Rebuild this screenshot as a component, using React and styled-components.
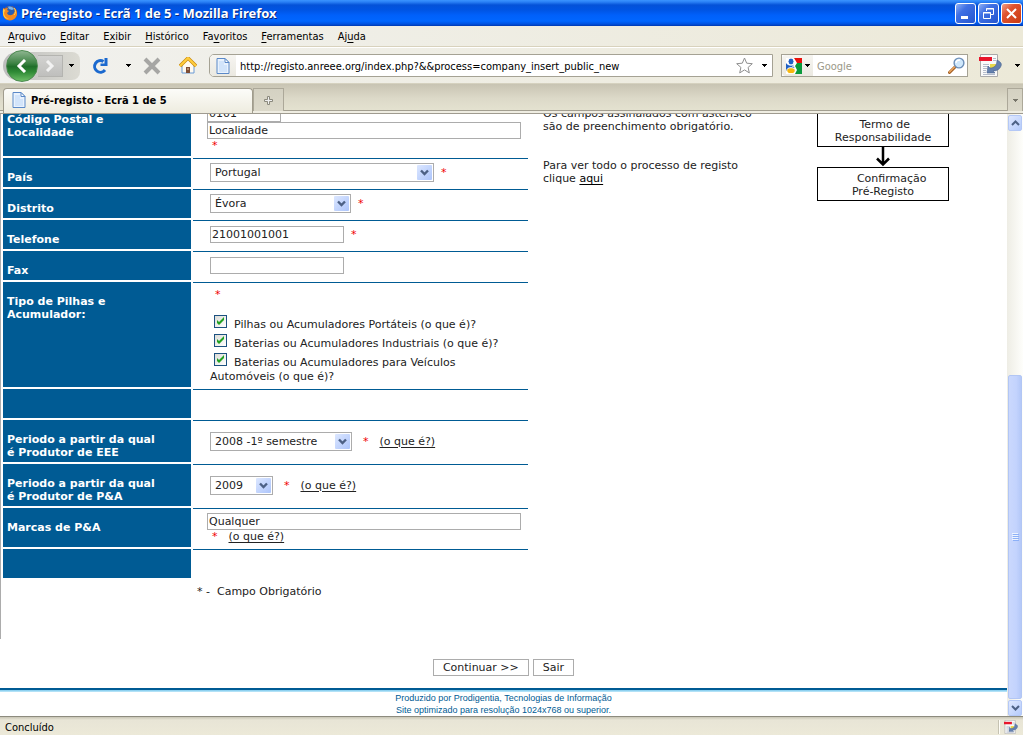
import React, { Component } from "react";
import styled, { createGlobalStyle } from "styled-components";

const blue = "#005b94";
const fieldGray = "#acacac";
const chromeFont = `"DejaVu Sans Condensed", "DejaVu Sans", sans-serif`;
const pageFont = `"DejaVu Sans", sans-serif`;

const GlobalStyle = createGlobalStyle`
  * { box-sizing: border-box; }
  body { margin: 0; background: white; }
  button, input, select { font: inherit; color: inherit; margin: 0; }
`;

const Browser = styled.div`
  display: flex;
  flex-direction: column;
  height: 100vh;
  overflow: hidden;
  font-family: ${chromeFont};
  font-size: 11px;
  color: black;
`;

const TitleBar = styled.header`
  display: flex;
  align-items: center;
  flex: none;
  gap: 2px;
  height: 26px;
  padding: 0 1px 0 2px;
  background: linear-gradient(#3b94ff 0, #2a80f5 2px, #0452d8 5px, #0054e3 10px, #0060fa 15px, #0066ff 21px, #0052e0 24px, #0038b0 26px);
`;

const Title = styled.h1`
  flex: 1;
  margin: 0;
  padding-left: 1px;
  color: white;
  font: bold 13px/16px "Noto Sans", sans-serif;
  text-shadow: 1px 1px #0a2a7c;
  white-space: nowrap;
`;

const WindowButton = styled.button`
  display: flex;
  align-items: center;
  justify-content: center;
  width: 21px;
  height: 21px;
  padding: 0;
  border: 1px solid white;
  border-radius: 3px;
  background: ${(props) =>
    props.$close
      ? "linear-gradient(135deg, #f0a08a, #e0532f 35%, #c93a12)"
      : "linear-gradient(135deg, #8fb0f5, #3f70e4 35%, #2455cf)"};
`;

const MenuBar = styled.nav`
  display: flex;
  align-items: center;
  flex: none;
  height: 21px;
  padding: 1px 0 0 1px;
  background: linear-gradient(90deg, #f1f1ee, #ece9d8);
  border-bottom: 1px solid #d8d2bd;
`;

const MenuItem = styled.button`
  padding: 0 7px;
  border: 0;
  background: none;
  line-height: 16px;

  u { text-underline-offset: 2px; }
`;

const NavBar = styled.div`
  display: flex;
  align-items: center;
  flex: none;
  height: 37px;
  padding: 0 1px 0 3px;
  border-top: 1px solid white;
  border-bottom: 1px solid #d5d1bf;
  background: linear-gradient(90deg, #f1f1ee, #ece9d8);
`;

const Keyhole = styled.div`
  display: flex;
  align-items: center;
  width: 77px;
  height: 28px;
  border-radius: 14px 8px 8px 14px;
  background: linear-gradient(90deg, #bdbdbd, #cfcfca 60%, #dcdbd3);
`;

const BackButton = styled.button`
  display: flex;
  flex: none;
  align-items: center;
  justify-content: center;
  width: 32px;
  height: 32px;
  margin-left: 3px;
  padding: 0;
  border: 1px solid #4c8a50;
  border-radius: 50%;
  background: linear-gradient(#8db58f, #3f8446 40%, #1f6f2a 52%, #2f8b36 70%, #6cbd66);
`;

const ForwardButton = styled.button`
  display: flex;
  align-items: center;
  justify-content: center;
  width: 25px;
  height: 22px;
  padding: 0;
  border: 1px solid #b4b4b0;
  border-left: 0;
  background: linear-gradient(#d2d2d0, #bfbfbd);
`;

const ToolButton = styled.button`
  display: flex;
  flex: none;
  align-items: center;
  justify-content: center;
  width: ${(props) => props.$width}px;
  height: 28px;
  padding: 0;
  border: 0;
  background: none;
`;

const AddressBox = styled.div`
  display: flex;
  align-items: center;
  flex: 1;
  height: 23px;
  margin-left: 1px;
  border: 1px solid #a5a294;
  border-radius: 5px 0 0 5px;
  background: white;
`;

const SearchBox = styled(AddressBox)`
  flex: 0 0 187px;
  margin-left: 8px;
  border-radius: 0;
`;

const BoxLead = styled.span`
  display: flex;
  align-items: center;
  justify-content: center;
  gap: 3px;
  width: ${(props) => props.$width}px;
  height: 21px;
  border-radius: 4px 0 0 4px;
  background: linear-gradient(#f6f5f1, #ebe9e1);
`;

const BoxInput = styled.input`
  flex: 1;
  min-width: 0;
  height: 21px;
  padding: 2px 4px 0;
  border: 0;
  outline: 0;
  background: none;

  &::placeholder { color: #9a9888; opacity: 1; }
`;

const TabBar = styled.div`
  display: flex;
  align-items: flex-end;
  flex: none;
  height: 30px;
  padding: 4px 0 0 3px;
  border-bottom: 1px solid #9f9b90;
  background: linear-gradient(#c8c4b3, #dcd9c8 14px, #e4e2d0 26px, #a39f91 26px, #a39f91 27px, #efede2 27px);
`;

const Tab = styled.button`
  display: flex;
  align-items: center;
  gap: 5px;
  width: 250px;
  height: 25px;
  padding: 0 8px 2px;
  border: 1px solid #a09c8d;
  border-bottom: 0;
  border-radius: 4px 4px 0 0;
  background: linear-gradient(#fcfcf9, #eeecdf);
  font-weight: bold;
  text-align: left;
`;

const SmallTab = styled.button`
  display: flex;
  align-items: center;
  justify-content: center;
  align-self: flex-start;
  width: ${(props) => props.$width}px;
  height: 23px;
  margin-left: ${(props) => (props.$end ? "auto" : "0")};
  padding: 0;
  border: 1px solid #aca899;
  border-bottom: 0;
  background: linear-gradient(#d4d1c2, #dcd9ca);
`;

const Content = styled.div`
  display: flex;
  flex: 1;
  min-height: 0;
`;

// the document is scrolled to its end, so it hangs from the bottom edge
const Viewport = styled.main`
  display: flex;
  flex: 1;
  flex-direction: column;
  justify-content: flex-end;
  min-width: 0;
  overflow: hidden;
  background: white;
  color: #222;
  font: 11px/13px ${pageFont};
`;

const Columns = styled.div`
  display: grid;
  flex: none;
  grid-template-columns: 527px minmax(0, 1fr) 132px;
  column-gap: 15px;
  padding: 0 58px 40px 0;
  border-left: 1px solid ${fieldGray};
`;

const Form = styled.form`
  display: grid;
  grid-template-columns: 188px minmax(0, 1fr);
  gap: 2px;
  padding-left: 2px;
`;

const LabelCell = styled.label`
  min-height: ${(props) => props.$height}px;
  padding: 13px 28px 0 4px;
  background: ${blue};
  color: white;
  font-weight: bold;
`;

const FieldCell = styled.div`
  padding: ${(props) => (props.$tall ? 11 : props.$text ? 5 : 4)}px 7px 0 ${(props) => (props.$wide ? 14 : 17)}px;
  border-top: 1px solid ${blue};
`;

const Line = styled.div`
  display: flex;
  align-items: center;
  gap: ${(props) => (props.$spread ? 11 : 7)}px;
  min-height: 14px;
  padding-left: ${(props) => (props.$indent ? 5 : 0)}px;
  line-height: 14px;
`;

const Star = styled.span`
  color: #f00000;
`;

const HelpLink = styled.a`
  color: ${(props) => (props.$dark ? "black" : "inherit")};
  text-decoration: underline;
  text-underline-offset: 2px;
`;

const TextInput = styled.input`
  display: block;
  width: ${(props) => props.$width || "100%"};
  height: 17px;
  padding: 0 1px;
  border: 1px solid ${fieldGray};
  border-radius: 0;
  outline: 0;
  background: white;
`;

const SelectWrap = styled.span`
  position: relative;
  display: block;
  width: ${(props) => props.$width}px;
  height: 19px;

  svg {
    position: absolute;
    top: 2px;
    right: 2px;
    pointer-events: none;
  }
`;

const SelectField = styled.select`
  appearance: none;
  display: block;
  width: 100%;
  height: 19px;
  padding: 0 18px 0 4px;
  border: 1px solid ${fieldGray};
  border-radius: 0;
  outline: 0;
  background: white;
`;

const CheckGroup = styled.div`
  margin-top: 11px;
  padding-bottom: 3px;
  line-height: 14px;
`;

const CheckLabel = styled.label`
  display: block;
`;

const CheckBox = styled.input`
  appearance: none;
  width: 13px;
  height: 13px;
  margin: 2px 7px 0 4px;
  border: 1px solid #1c5180;
  background: linear-gradient(135deg, #dcdcd7, #fff);
  vertical-align: baseline;

  &:checked {
    background:
      url("data:image/svg+xml,%3Csvg xmlns='http://www.w3.org/2000/svg' viewBox='0 0 11 11'%3E%3Cpath d='M2 4v3l2 2 5-5V1L4 6z' fill='%2321a121'/%3E%3C/svg%3E"),
      linear-gradient(135deg, #dcdcd7, #fff);
  }
`;

const Footnote = styled.p`
  grid-column: 2;
  margin: 5px 0 0 4px;
  line-height: 14px;
  white-space: pre;
`;

const Info = styled.aside`
  max-width: 225px;
  padding-top: 7px;

  p { margin: 0 0 26px; }
`;

const Flow = styled.div`
  display: flex;
  flex-direction: column;
  align-items: center;
  padding-top: 13px;
`;

const FlowBox = styled.div`
  display: flex;
  flex-direction: column;
  justify-content: center;
  align-self: stretch;
  height: 34px;
  padding-top: 1px;
  border: 1px solid black;
  text-align: center;
  white-space: pre;
`;

const Actions = styled.div`
  display: flex;
  flex: none;
  justify-content: center;
  gap: 4px;
  padding: 20px 0 12px;
`;

const PageButton = styled.button`
  height: 17px;
  padding: 0 9px;
  border: 1px solid ${fieldGray};
  border-radius: 0;
  background: white;
  line-height: 15px;
`;

const PageFooter = styled.footer`
  flex: none;
  border-top: 2px solid ${blue};
  color: ${blue};
  font: 9px/12px "Liberation Sans", sans-serif;
  text-align: center;

  &::before {
    content: "";
    display: block;
    height: 2px;
    background: linear-gradient(#7cc8ec, #c4eafa);
  }
`;

const ScrollBar = styled.div`
  display: flex;
  flex-direction: column;
  flex: none;
  width: 16px;
  padding: 1px 1px 0;
  background: linear-gradient(90deg, #eeede5, #fefefb);
`;

const ScrollButton = styled.button`
  display: flex;
  align-items: center;
  justify-content: center;
  flex: none;
  height: 16px;
  padding: 0;
  border: 1px solid #b4c8f6;
  border-radius: 2px;
  background: linear-gradient(135deg, #dfe8ff, #b5cbfb);
`;

const ScrollTrack = styled.div`
  display: flex;
  flex: 1;
  align-items: flex-end;
`;

const ScrollThumb = styled.div`
  display: flex;
  align-items: center;
  justify-content: center;
  width: 100%;
  height: 57%;
  margin-bottom: 1px;
  border: 1px solid #b2c6f4;
  border-radius: 2px;
  background: linear-gradient(90deg, #cad8fd, #c3d3fd 60%, #b4c8f8);
`;

const StatusBar = styled.footer`
  display: flex;
  align-items: center;
  justify-content: space-between;
  flex: none;
  height: 19px;
  padding: 2px 5px 0;
  border-top: 1px solid #8d8b7e;
  background: linear-gradient(#c9c6b6, #e8e5d6 3px, #ece9d8);
`;

const StatusIcon = styled.span`
  display: flex;
  padding-left: 4px;
  border-left: 1px solid #fffef8;
  box-shadow: -1px 0 #c5c2b2;
`;

const Caret = ({ color = "#000" }) => (
  <svg width="5" height="3" viewBox="0 0 5 3" shapeRendering="crispEdges">
    <path d="M0 0h5v1h-1v1h-1v1h-1v-1h-1v-1h-1z" fill={color} />
  </svg>
);

const FirefoxIcon = () => (
  <svg width="16" height="16" viewBox="0 0 16 16">
    <circle cx="8" cy="8" r="7" fill="#e66000" />
    <circle cx="8" cy="6" r="5" fill="#2a5fb4" />
    <path d="M6 2c2-1 5 0 6 2l-2 1-3-1z" fill="#79b5ee" />
    <path d="M1 3l2 1c1-1 2-1 3-1L5 5l2 1-2 2c1 3 5 3 7 0 1-2 1-4 0-5 3 2 4 6 2 9-3 5-12 5-13-3z" fill="#f58a1f" />
    <path d="M1 4l2 1-1 3c0 3 2 5 5 6-4 0-7-3-6-10z" fill="#ffd04a" />
    <path d="M12 3c2 2 2 5 0 7" fill="none" stroke="#ffd75a" />
  </svg>
);

const PageIcon = () => (
  <svg width="14" height="16" viewBox="0 0 14 16">
    <path d="M1 .5h8l4 4v11H1z" fill="#e9f2fd" stroke="#5b89c8" />
    <path d="M3 3h5v4h3v7H3z" fill="#d2e4fa" />
    <path d="M9 .5v4h4z" fill="#fff" stroke="#5b89c8" />
  </svg>
);

const ReloadIcon = () => (
  <svg width="18" height="18" viewBox="0 0 18 18">
    <path d="M12.500 4.500a5.800 5.800 0 1 0 1.500 8.500" fill="none" stroke="#1b69cf" strokeWidth="3" />
    <path d="M16.500 1v8H9.500V6.500h4V1z" fill="#1b69cf" />
  </svg>
);

const HomeIcon = () => (
  <svg width="18" height="17" viewBox="0 0 18 17">
    <path d="M3 8l6-6 6 6v8H3z" fill="#fffaf0" stroke="#6b9bd6" />
    <path d="M1 9l8-8 8 8" fill="none" stroke="#c98a12" strokeWidth="3.400" strokeLinejoin="round" />
    <path d="M1 9l8-8 8 8" fill="none" stroke="#ffce3d" strokeWidth="2" strokeLinejoin="round" />
    <path d="M7 10h4v6H7z" fill="#7d4d35" />
    <path d="M8 11h2v2H8z" fill="#b98d6c" />
  </svg>
);

const GoogleIcon = () => (
  <svg width="16" height="16" viewBox="0 0 16 16">
    <path d="M0 0h16v16H0z" fill="#fff" />
    <path d="M8 0h8v5h-5z" fill="#e8120c" />
    <path d="M11 5h5v11H9l2-4-2-4z" fill="#0a9a3c" />
    <path d="M0 5c2 3 5 3 7 2l2 3-9 3z" fill="#2060c4" />
    <ellipse cx="5" cy="3.5" rx="3" ry="3.5" fill="#2060c4" stroke="#fff" />
    <ellipse cx="5" cy="12.7" rx="4.2" ry="3" fill="#f6b70e" stroke="#fff" />
    <path d="M6 8c2 0 3 1 3 3" fill="none" stroke="#fff" />
  </svg>
);

const SearchIcon = () => (
  <svg width="17" height="17" viewBox="0 0 17 17">
    <path d="M1.5 15.5l6-6" stroke="#a35e22" strokeWidth="3" strokeLinecap="round" />
    <path d="M1.5 15l6-6" stroke="#f0aa62" strokeWidth="1.2" strokeLinecap="round" />
    <circle cx="11" cy="6" r="4.9" fill="#cfe7fb" stroke="#6d8fb8" strokeWidth="1.4" />
    <path d="M8 6c0-2 2-3 4-3" stroke="#fff" fill="none" strokeWidth="1.4" />
  </svg>
);

const PdfIcon = ({ size = 23 }) => (
  <svg width={size} height={size} viewBox="0 0 23 23">
    <path d="M1.500 .5h17v22h-17z" fill="#fafafa" stroke="#a9a9a9" />
    <path d="M4 10.500h6M4 12.500h6M4 14.500h4M4 16.500h3M4 18.500h3M4 20.500h12M14 4.500h3M14 6.500h3" stroke="#b5bccb" />
    <path d="M0 3h13v4H0z" fill="#e8152b" />
    <path d="M11 10h6v6h-6z" fill="#e8d84b" />
    <path d="M18 6c4 2 5 4 4 6-1 3-4 5-8 5l2 2H8l1-7 2 2c4 0 7-2 7-8z" fill="#6480ae" stroke="#46618f" strokeWidth=".6" />
  </svg>
);

const SelectArrow = () => (
  <svg width="15" height="15" viewBox="0 0 15 15">
    <defs>
      <linearGradient id="arrowFill" x2="1" y2="1">
        <stop stopColor="#dce7ff" />
        <stop offset="1" stopColor="#adc5fb" />
      </linearGradient>
    </defs>
    <rect width="15" height="15" rx="1" fill="url(#arrowFill)" />
    <path d="M4 5.5l3.5 3.5L11 5.5" fill="none" stroke="#4d6185" strokeWidth="2.4" />
  </svg>
);

const Chevron = ({ up }) => (
  <svg width="9" height="6" viewBox="0 0 9 6">
    <path d={up ? "M1 5l3.5-3.5L8 5" : "M1 1l3.5 3.5L8 1"} fill="none" stroke="#4d6185" strokeWidth="2" />
  </svg>
);

const Select = ({ id, value, width }) => (
  <SelectWrap $width={width}>
    <SelectField id={id} defaultValue={value}>
      <option>{value}</option>
    </SelectField>
    <SelectArrow />
  </SelectWrap>
);

const menus = [
  ["", "A", "rquivo"],
  ["", "E", "ditar"],
  ["E", "x", "ibir"],
  ["", "H", "istórico"],
  ["Fa", "v", "oritos"],
  ["", "F", "erramentas"],
  ["Aj", "u", "da"]
];

const types = [
  "Pilhas ou Acumuladores Portáteis (o que é)?",
  "Baterias ou Acumuladores Industriais (o que é)?",
  "Baterias ou Acumuladores para Veículos Automóveis (o que é)?"
];

export default class App extends Component {
  handleSubmit = event => {
    event.preventDefault();
  };

  renderChrome() {
    return (
      <>
        <TitleBar>
          <FirefoxIcon />
          <Title>Pré-registo - Ecrã 1 de 5 - Mozilla Firefox</Title>
          <WindowButton aria-label="Minimizar">
            <svg width="13" height="13"><path d="M2 9h7v3H2z" fill="#fff" /></svg>
          </WindowButton>
          <WindowButton aria-label="Restaurar">
            <svg width="13" height="13" fill="none" stroke="#fff">
              <path d="M4.500 4V1.500h7v6H9M4 2h8M1.500 5.500h7v6h-7zM1 6h8" />
            </svg>
          </WindowButton>
          <WindowButton $close aria-label="Fechar">
            <svg width="13" height="13"><path d="M2 2l9 9M11 2l-9 9" stroke="#fff" strokeWidth="2" /></svg>
          </WindowButton>
        </TitleBar>
        <MenuBar>
          {menus.map(([before, key, after]) => (
            <MenuItem key={before + key + after}>{before}<u>{key}</u>{after}</MenuItem>
          ))}
        </MenuBar>
        <NavBar>
          <Keyhole>
            <BackButton aria-label="Voltar">
              <svg width="14" height="14"><path d="M10 1L4 7l6 6" fill="none" stroke="#fff" strokeWidth="3" /></svg>
            </BackButton>
            <ForwardButton aria-label="Avançar">
              <svg width="10" height="12"><path d="M2 1l5 5-5 5" fill="none" stroke="#f2f2f2" strokeWidth="3" /></svg>
            </ForwardButton>
            <ToolButton $width={17} aria-label="Histórico recente"><Caret /></ToolButton>
          </Keyhole>
          <ToolButton $width={40} aria-label="Recarregar"><ReloadIcon /></ToolButton>
          <ToolButton $width={16} aria-label="Opções"><Caret /></ToolButton>
          <ToolButton $width={32} aria-label="Parar">
            <svg width="18" height="18"><path d="M2 2l14 14M16 2L2 16" stroke="#a6a6a4" strokeWidth="4" /></svg>
          </ToolButton>
          <ToolButton $width={40} aria-label="Página inicial"><HomeIcon /></ToolButton>
          <AddressBox>
            <BoxLead $width={26}><PageIcon /></BoxLead>
            <BoxInput
              aria-label="Endereço"
              defaultValue="http://registo.anreee.org/index.php?&&process=company_insert_public_new"
            />
            <ToolButton $width={24} aria-label="Favoritar">
              <svg width="17" height="17">
                <path d="M8.500 1l2.200 5.200 5.600.5-4.200 3.700 1.200 5.500-4.800-3-4.800 3 1.200-5.500L.7 6.700l5.600-.5z" fill="#fff" stroke="#8f8f8f" />
              </svg>
            </ToolButton>
            <ToolButton $width={16} aria-label="Lista de endereços"><Caret /></ToolButton>
          </AddressBox>
          <SearchBox>
            <BoxLead $width={31}><GoogleIcon /><Caret /></BoxLead>
            <BoxInput aria-label="Pesquisar" placeholder="Google" />
            <ToolButton $width={22} aria-label="Procurar"><SearchIcon /></ToolButton>
          </SearchBox>
          <ToolButton $width={44} aria-label="PDF"><PdfIcon /></ToolButton>
          <ToolButton $width={10} aria-label="Opções de PDF"><Caret /></ToolButton>
        </NavBar>
        <TabBar>
          <Tab><PageIcon />Pré-registo - Ecrã 1 de 5</Tab>
          <SmallTab $width={31} aria-label="Novo separador">
            <svg width="9" height="9"><path d="M3.500 .5h2v3h3v2h-3v3h-2v-3h-3v-2h3z" fill="#eee" stroke="#8b897d" /></svg>
          </SmallTab>
          <SmallTab $width={16} $end aria-label="Todos os separadores"><Caret color="#77756a" /></SmallTab>
        </TabBar>
      </>
    );
  }

  renderForm() {
    return (
      <Form id="registo" onSubmit={this.handleSubmit}>
        <LabelCell $height={56} htmlFor="localidade">Código Postal e Localidade</LabelCell>
        <FieldCell $wide>
          <TextInput $width="74px" aria-label="Código Postal" defaultValue="0101" />
          <TextInput id="localidade" defaultValue="Localidade" />
          <Line $indent><Star>*</Star></Line>
        </FieldCell>

        <LabelCell $height={29} htmlFor="pais">País</LabelCell>
        <FieldCell>
          <Line><Select id="pais" value="Portugal" width={224} /><Star>*</Star></Line>
        </FieldCell>

        <LabelCell $height={29} htmlFor="distrito">Distrito</LabelCell>
        <FieldCell>
          <Line><Select id="distrito" value="Évora" width={141} /><Star>*</Star></Line>
        </FieldCell>

        <LabelCell $height={29} htmlFor="telefone">Telefone</LabelCell>
        <FieldCell $text>
          <Line>
            <TextInput id="telefone" $width="134px" defaultValue="21001001001" />
            <Star>*</Star>
          </Line>
        </FieldCell>

        <LabelCell $height={29} htmlFor="fax">Fax</LabelCell>
        <FieldCell $text><TextInput id="fax" $width="134px" /></FieldCell>

        <LabelCell $height={105} as="div" id="tipo">Tipo de Pilhas e Acumulador:</LabelCell>
        <FieldCell $text role="group" aria-labelledby="tipo">
          <Line $indent><Star>*</Star></Line>
          <CheckGroup>
            {types.map(type => (
              <CheckLabel key={type}>
                <CheckBox type="checkbox" defaultChecked />{type}
              </CheckLabel>
            ))}
          </CheckGroup>
        </FieldCell>

        <LabelCell $height={29} as="div" />
        <FieldCell />

        <LabelCell $height={42} htmlFor="eee">Periodo a partir da qual é Produtor de EEE</LabelCell>
        <FieldCell $tall>
          <Line $spread>
            <Select id="eee" value="2008 -1º semestre" width={142} />
            <Star>*</Star>
            <HelpLink href="#eee">(o que é?)</HelpLink>
          </Line>
        </FieldCell>

        <LabelCell $height={42} htmlFor="pa">Periodo a partir da qual é Produtor de P&A</LabelCell>
        <FieldCell $tall>
          <Line $spread>
            <Select id="pa" value="2009" width={63} />
            <Star>*</Star>
            <HelpLink href="#pa">(o que é?)</HelpLink>
          </Line>
        </FieldCell>

        <LabelCell $height={39} htmlFor="marcas">Marcas de P&A</LabelCell>
        <FieldCell $wide>
          <TextInput id="marcas" defaultValue="Qualquer" />
          <Line $spread $indent>
            <Star>*</Star>
            <HelpLink href="#marcas">(o que é?)</HelpLink>
          </Line>
        </FieldCell>

        <LabelCell $height={29} as="div" />
        <FieldCell />
        <Footnote>{"* -  Campo Obrigatório"}</Footnote>
      </Form>
    );
  }

  render() {
    return (
      <Browser>
        <GlobalStyle />
        {this.renderChrome()}
        <Content>
          <Viewport>
            <Columns>
              {this.renderForm()}
              <Info>
                <p>Os campos assinalados com asterisco são de preenchimento obrigatório.</p>
                <p>Para ver todo o processo de registo clique <HelpLink $dark href="#processo">aqui</HelpLink></p>
              </Info>
              <Flow>
                <FlowBox>
                  <span>{" Termo de"}</span>
                  <span>Responsabilidade</span>
                </FlowBox>
                <svg width="14" height="20">
                  <path d="M7 0v18M1 11.500l6 6 6-6" fill="none" stroke="#000" strokeWidth="2.500" />
                </svg>
                <FlowBox>
                  <span>{"     Confirmação"}</span>
                  <span>Pré-Registo</span>
                </FlowBox>
              </Flow>
            </Columns>
            <Actions>
              <PageButton form="registo" type="submit">Continuar &gt;&gt;</PageButton>
              <PageButton type="button">Sair</PageButton>
            </Actions>
            <PageFooter>
              <div>Produzido por Prodigentia, Tecnologias de Informação</div>
              <div>Site optimizado para resolução 1024x768 ou superior.</div>
            </PageFooter>
          </Viewport>
          <ScrollBar>
            <ScrollButton aria-label="Subir"><Chevron up /></ScrollButton>
            <ScrollTrack>
              <ScrollThumb>
                <svg width="7" height="8" shapeRendering="crispEdges">
                  <path d="M0 .5h6M0 2.500h6M0 4.500h6M0 6.500h6" stroke="#eef4fe" />
                  <path d="M1 1.500h6M1 3.500h6M1 5.500h6M1 7.500h6" stroke="#8cb0f8" />
                </svg>
              </ScrollThumb>
            </ScrollTrack>
            <ScrollButton aria-label="Descer"><Chevron /></ScrollButton>
          </ScrollBar>
        </Content>
        <StatusBar>
          <span>Concluído</span>
          <StatusIcon><PdfIcon size={14} /></StatusIcon>
        </StatusBar>
      </Browser>
    );
  }
}
